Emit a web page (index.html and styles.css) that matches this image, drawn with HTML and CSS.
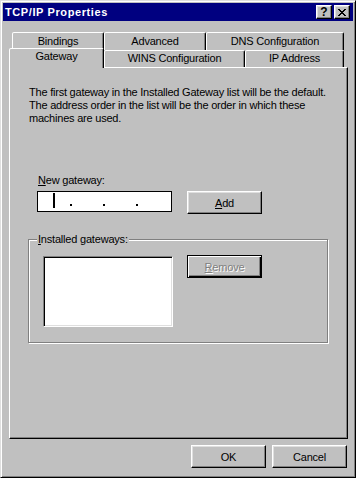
FILE: index.html
```html
<!DOCTYPE html>
<html lang="en">
<head>
  <meta charset="UTF-8">
  <title>TCP/IP Properties</title>
  <link rel="stylesheet" href="styles.css">
</head>
<body>
  <div class="window">
    <div class="titlebar">
      <span class="title">TCP/IP Properties</span>
      <div class="caption-btns">
        <button class="cap-btn help">?</button>
        <button class="cap-btn close">
          <svg width="8" height="7" viewBox="0 0 8 7"><path d="M0 0h2v1h1v1h2v-1h1v-1h2v1h-1v1h-1v1h-1v1h1v1h1v1h1v1h-2v-1h-1v-1h-2v1h-1v1h-2v-1h1v-1h1v-1h1v-1h-1v-1h-1v-1h-1z" fill="#000"/></svg>
        </button>
      </div>
    </div>

    <div class="tabs">
      <div class="tab-row back">
        <div class="tab t-bind">Bindings</div>
        <div class="tab t-adv">Advanced</div>
        <div class="tab t-dns">DNS Configuration</div>
      </div>
      <div class="tab-row front">
        <div class="tab t-gw selected">Gateway</div>
        <div class="tab t-wins">WINS Configuration</div>
        <div class="tab t-ip">IP Address</div>
      </div>
    </div>

    <div class="panel">
      <p class="desc">The first gateway in the Installed Gateway list will be the default.<br>The address order in the list will be the order in which these<br>machines are used.</p>

      <div class="field-label"><u>N</u>ew gateway:</div>
      <div class="gw-row">
        <div class="ip-field">
          <span class="caret"></span>
          <span class="dot first"></span>
          <span class="dot"></span>
          <span class="dot"></span>
        </div>
        <button class="btn add"><u>A</u>dd</button>
      </div>

      <fieldset class="group">
        <legend><u>I</u>nstalled gateways:</legend>
        <div class="group-row">
          <div class="listbox"></div>
          <button class="btn default" disabled><u>R</u>emove</button>
        </div>
      </fieldset>
    </div>

    <div class="dialog-btns">
      <button class="btn">OK</button>
      <button class="btn">Cancel</button>
    </div>
  </div>
</body>
</html>
```

FILE: styles.css
```css
* { box-sizing: border-box; }
body {
  margin: 0;
  background: #c0c0c0;
}
.window {
  width: 356px;
  height: 478px;
  padding: 2px;
  background: #c0c0c0;
  border: 1px solid;
  border-color: #dfdfdf #000 #000 #dfdfdf;
  box-shadow: inset 1px 1px #fff, inset -1px -1px #808080;
  font: 11px "Liberation Sans", Arial, sans-serif;
  letter-spacing: -0.2px;
  color: #000;
}

/* title bar */
.titlebar {
  display: flex;
  align-items: center;
  justify-content: space-between;
  height: 18px;
  padding: 0 3px 0 2px;
  background: #000080;
  color: #fff;
}
.title { font-weight: bold; font-size: 11px; letter-spacing: 0.6px; }
.caption-btns { display: flex; gap: 2px; }
.cap-btn {
  width: 16px;
  height: 14px;
  padding: 0;
  display: flex;
  align-items: center;
  justify-content: center;
  background: #c0c0c0;
  border: 1px solid;
  border-color: #fff #000 #000 #fff;
  box-shadow: inset -1px -1px #808080, inset 1px 1px #dfdfdf;
  font: bold 12px "Liberation Sans", Arial, sans-serif;
  color: #000;
}
.cap-btn svg { display: block; }

/* tabs */
.tabs { margin-top: 11px; }
.tab-row { display: flex; align-items: flex-start; }
.tab-row.back { margin-left: 9px; }
.tab-row.front { margin-left: 6px; }
.tab {
  height: 18px;
  padding-top: 2px;
  line-height: 13px;
  text-align: center;
  border: 1px solid;
  border-bottom: none;
  border-color: #fff #000 transparent #fff;
  border-radius: 2px 2px 0 0;
  box-shadow: inset -1px 0 #808080;
  background: #c0c0c0;
  white-space: nowrap;
}
.tab-row.front .tab { height: 17px; padding-top: 1px; }
.tab-row.front .tab.selected {
  position: relative;
  z-index: 1;
  height: 20px;
  margin-top: -2px;
  margin-bottom: -1px;
  padding-top: 1px;
}
.t-bind { width: 92px; }
.t-adv { width: 102px; }
.t-dns { width: 138px; }
.t-gw { width: 95px; }
.t-wins { width: 141px; }
.t-ip { width: 99px; }

/* panel */
.panel {
  height: 372px;
  margin: 0 5px 0 6px;
  border: 1px solid;
  border-color: #fff #000 #000 #fff;
  box-shadow: inset -1px -1px #808080;
  overflow: hidden;
}
.desc {
  margin: 18px 0 0 19px;
  line-height: 13px;
  letter-spacing: -0.22px;
  white-space: nowrap;
}
.field-label {
  margin: 49px 0 0 28px;
  line-height: 13px;
}
.gw-row {
  display: flex;
  align-items: flex-start;
  gap: 15px;
  margin: 4px 0 0 27px;
}
.ip-field {
  width: 135px;
  height: 21px;
  display: flex;
  align-items: flex-start;
  background: #fff;
  border: 1px solid #000;
}
.caret {
  width: 2px;
  height: 15px;
  margin: 1px 0 0 15px;
  background: #000;
}
.dot {
  width: 2px;
  height: 2px;
  margin: 12px 0 0 31px;
  background: #000;
}
.dot.first { margin-left: 15px; }

.btn {
  width: 75px;
  height: 23px;
  padding: 0;
  background: #c0c0c0;
  border: 1px solid;
  border-color: #fff #000 #000 #fff;
  box-shadow: inset -1px -1px #808080, inset 1px 1px #dfdfdf;
  font: 11px "Liberation Sans", Arial, sans-serif;
  letter-spacing: -0.2px;
  color: #000;
}
.btn.default {
  margin-top: -1px;
  border-color: #000;
  box-shadow: inset 1px 1px #fff, inset -1px -1px #000, inset -2px -2px #808080;
}
.btn:disabled {
  color: #808080;
  text-shadow: 1px 1px #fff;
}

/* group box */
.group {
  width: 300px;
  height: 110px;
  margin: 19px 0 0 18px;
  padding: 0;
  border: 1px solid #808080;
  box-shadow: inset 1px 1px #fff, 1px 1px #fff;
}
.group legend {
  margin-left: 8px;
  padding: 0 1px;
  line-height: 13px;
  background: #c0c0c0;
}
.group-row {
  display: flex;
  align-items: flex-start;
  gap: 14px;
  margin: 10px 0 0 14px;
}
.listbox {
  width: 130px;
  height: 71px;
  background: #fff;
  border: 1px solid;
  border-color: #808080 #fff #fff #808080;
  box-shadow: inset 1px 1px #000, inset -1px -1px #dfdfdf;
}

/* bottom buttons */
.dialog-btns {
  display: flex;
  justify-content: flex-end;
  gap: 6px;
  margin: 6px 6px 0 0;
}
```
